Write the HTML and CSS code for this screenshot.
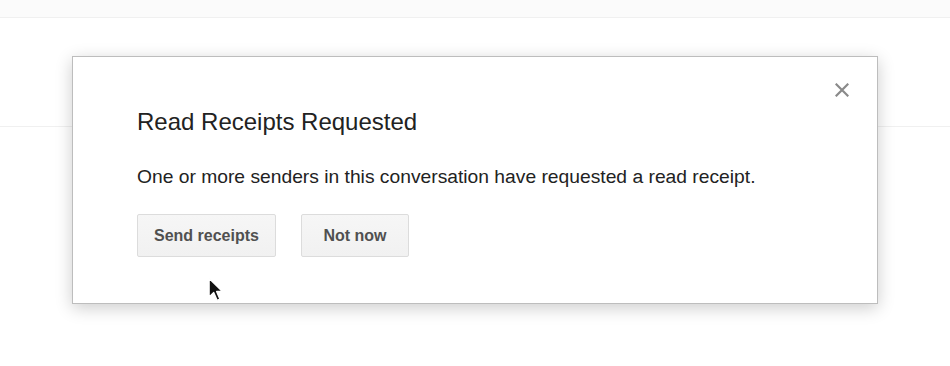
FILE: index.html
```html
<!DOCTYPE html>
<html lang="en">
<head>
<meta charset="utf-8">
<title>Read Receipts Requested</title>
<link rel="stylesheet" href="styles.css">
</head>
<body>
<div class="page">
  <div class="topbar"></div>
  <div class="spacer"></div>
  <div class="rule"></div>
</div>

<div class="dialog" role="dialog" aria-labelledby="dlg-title">
  <button class="close" aria-label="Close">
    <svg width="14" height="14" viewBox="0 0 14 14"><path d="M1.5 1.5 L12.5 12.5 M12.5 1.5 L1.5 12.5" stroke="#8a8a8a" stroke-width="2.2" stroke-linecap="square"/></svg>
  </button>
  <h2 class="title" id="dlg-title">Read Receipts Requested</h2>
  <p class="message">One or more senders in this conversation have requested a read receipt.</p>
  <div class="actions">
    <button class="btn">Send receipts</button>
    <button class="btn">Not now</button>
  </div>
</div>

<svg class="cursor" width="16" height="26" viewBox="0 0 14 22">
  <path d="M1 1 L1 17 L5 13.2 L8 20 L10.4 19 L7.5 12.3 L12.6 12.3 Z" fill="#111" stroke="#fff" stroke-width="1.1" stroke-linejoin="round"/>
</svg>
</body>
</html>
```

FILE: styles.css
```css
html, body {
  margin: 0;
  padding: 0;
  background: #ffffff;
}

body {
  width: 950px;
  height: 366px;
  overflow: hidden;
  position: relative;
  font-family: "Liberation Sans", Arial, sans-serif;
  color: #222;
}

.page {
  display: flex;
  flex-direction: column;
}

.topbar {
  height: 17px;
  background: #fbfbfb;
  border-bottom: 1px solid #f0f0f0;
}

.spacer {
  height: 108px;
}

.rule {
  height: 1px;
  background: #f0f0f0;
}

.dialog {
  position: absolute;
  left: 72px;
  top: 56px;
  box-sizing: content-box;
  width: 676px;
  background: #fff;
  border: 1px solid #bdbdbd;
  box-shadow: 0 4px 16px rgba(0, 0, 0, 0.2);
  padding: 51px 64px 46px 64px;
}

.close {
  position: absolute;
  left: 762px;
  top: 26px;
  width: 14px;
  height: 14px;
  padding: 0;
  margin: 0;
  border: 0;
  background: transparent;
  display: flex;
}

.title {
  margin: 0;
  font-size: 24px;
  line-height: 28px;
  font-weight: normal;
  color: #222;
}

.message {
  margin: 30px 0 0 0;
  font-size: 19.25px;
  line-height: 22px;
  color: #222;
  white-space: nowrap;
}

.actions {
  margin-top: 26px;
  display: flex;
  gap: 25px;
}

.btn {
  height: 43px;
  min-width: 108px;
  padding: 0 16px;
  box-sizing: border-box;
  font-family: "Liberation Sans", Arial, sans-serif;
  font-weight: bold;
  font-size: 16px;
  color: #505050;
  background: linear-gradient(#f6f6f6, #f1f1f1);
  border: 1px solid #dcdcdc;
  border-radius: 2px;
}

.cursor {
  position: absolute;
  left: 208px;
  top: 277px;
}
```
